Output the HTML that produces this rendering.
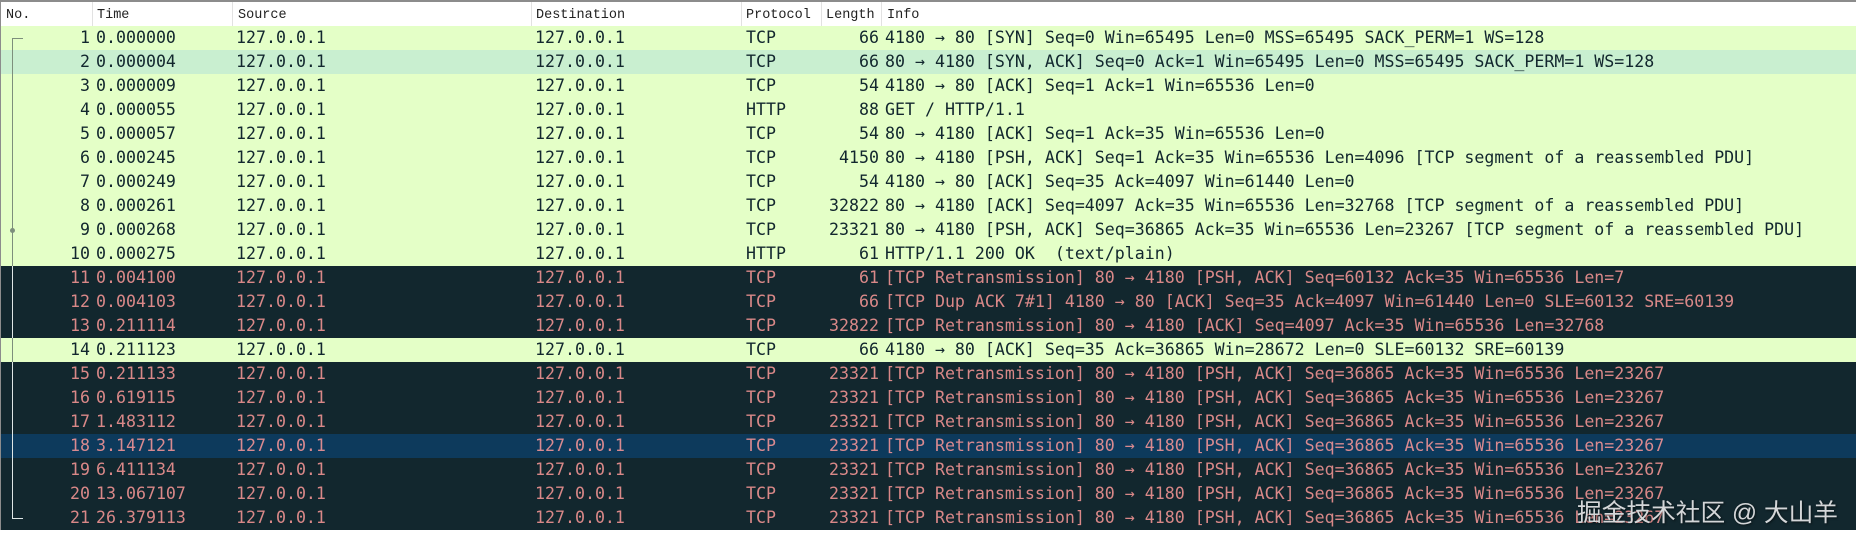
<!DOCTYPE html>
<html><head><meta charset="utf-8">
<style>
html,body{margin:0;padding:0;background:#fff;width:1856px;height:545px;overflow:hidden}
#w{position:relative;width:1856px;height:545px;overflow:hidden;font-family:"DejaVu Sans Mono","Liberation Mono",monospace;font-size:16.6px}
.top{position:absolute;left:0;top:0;width:1856px;height:2px;background:#8c8c8c}
.left{position:absolute;left:0;top:0;width:1px;height:530px;background:#8c8c8c}
.h{position:absolute;top:6px;font:13.5px/20px "Liberation Mono",monospace;color:#222;white-space:pre}
.s{position:absolute;top:2px;width:1px;height:24px;background:#e2e2e2}
.r{position:absolute;left:1px;width:1855px;height:24px;background:#e4ffc7;color:#12272e;line-height:24px;white-space:pre}
.r.d{background:#12272e;color:#d98888}
.r.a{background:#c9efd0}
.r.b{background:#0d3a5c;color:#d98a90}
.r span{position:absolute;top:0}
.n{left:0;width:89px;text-align:right}
.t{left:95px}.o{left:235px}.e{left:534px}.p{left:745px}
.l{left:780px;width:98px;text-align:right}
.i{left:884px}
.v{position:absolute;left:12px;width:1px;background:#7d8f7c}
.v.w{background:#dfe6e6}
.hl{position:absolute;left:12px;width:11px;height:1px}
.wm{position:absolute;left:1577px;top:499px;font:24.7px/30px "Liberation Sans","Noto Sans CJK SC",sans-serif;color:#d4d6d8;text-shadow:1px 1px 2px rgba(0,0,0,.55);white-space:pre}
</style></head><body><div id="w">
<div class="top"></div>
<span class="h" style="left:6px">No.</span>
<span class="h" style="left:97px">Time</span>
<span class="h" style="left:238px">Source</span>
<span class="h" style="left:536px">Destination</span>
<span class="h" style="left:746px">Protocol</span>
<span class="h" style="left:826px">Length</span>
<span class="h" style="left:887px">Info</span>
<div class="s" style="left:92px"></div><div class="s" style="left:232px"></div><div class="s" style="left:531px"></div><div class="s" style="left:741px"></div><div class="s" style="left:821px"></div><div class="s" style="left:881px"></div>

<div class="r" style="top:26px"><span class="n">1</span><span class="t">0.000000</span><span class="o">127.0.0.1</span><span class="e">127.0.0.1</span><span class="p">TCP</span><span class="l">66</span><span class="i">4180 → 80 [SYN] Seq=0 Win=65495 Len=0 MSS=65495 SACK_PERM=1 WS=128</span></div>
<div class="r a" style="top:50px"><span class="n">2</span><span class="t">0.000004</span><span class="o">127.0.0.1</span><span class="e">127.0.0.1</span><span class="p">TCP</span><span class="l">66</span><span class="i">80 → 4180 [SYN, ACK] Seq=0 Ack=1 Win=65495 Len=0 MSS=65495 SACK_PERM=1 WS=128</span></div>
<div class="r" style="top:74px"><span class="n">3</span><span class="t">0.000009</span><span class="o">127.0.0.1</span><span class="e">127.0.0.1</span><span class="p">TCP</span><span class="l">54</span><span class="i">4180 → 80 [ACK] Seq=1 Ack=1 Win=65536 Len=0</span></div>
<div class="r" style="top:98px"><span class="n">4</span><span class="t">0.000055</span><span class="o">127.0.0.1</span><span class="e">127.0.0.1</span><span class="p">HTTP</span><span class="l">88</span><span class="i">GET / HTTP/1.1</span></div>
<div class="r" style="top:122px"><span class="n">5</span><span class="t">0.000057</span><span class="o">127.0.0.1</span><span class="e">127.0.0.1</span><span class="p">TCP</span><span class="l">54</span><span class="i">80 → 4180 [ACK] Seq=1 Ack=35 Win=65536 Len=0</span></div>
<div class="r" style="top:146px"><span class="n">6</span><span class="t">0.000245</span><span class="o">127.0.0.1</span><span class="e">127.0.0.1</span><span class="p">TCP</span><span class="l">4150</span><span class="i">80 → 4180 [PSH, ACK] Seq=1 Ack=35 Win=65536 Len=4096 [TCP segment of a reassembled PDU]</span></div>
<div class="r" style="top:170px"><span class="n">7</span><span class="t">0.000249</span><span class="o">127.0.0.1</span><span class="e">127.0.0.1</span><span class="p">TCP</span><span class="l">54</span><span class="i">4180 → 80 [ACK] Seq=35 Ack=4097 Win=61440 Len=0</span></div>
<div class="r" style="top:194px"><span class="n">8</span><span class="t">0.000261</span><span class="o">127.0.0.1</span><span class="e">127.0.0.1</span><span class="p">TCP</span><span class="l">32822</span><span class="i">80 → 4180 [ACK] Seq=4097 Ack=35 Win=65536 Len=32768 [TCP segment of a reassembled PDU]</span></div>
<div class="r" style="top:218px"><span class="n">9</span><span class="t">0.000268</span><span class="o">127.0.0.1</span><span class="e">127.0.0.1</span><span class="p">TCP</span><span class="l">23321</span><span class="i">80 → 4180 [PSH, ACK] Seq=36865 Ack=35 Win=65536 Len=23267 [TCP segment of a reassembled PDU]</span></div>
<div class="r" style="top:242px"><span class="n">10</span><span class="t">0.000275</span><span class="o">127.0.0.1</span><span class="e">127.0.0.1</span><span class="p">HTTP</span><span class="l">61</span><span class="i">HTTP/1.1 200 OK  (text/plain)</span></div>
<div class="r d" style="top:266px"><span class="n">11</span><span class="t">0.004100</span><span class="o">127.0.0.1</span><span class="e">127.0.0.1</span><span class="p">TCP</span><span class="l">61</span><span class="i">[TCP Retransmission] 80 → 4180 [PSH, ACK] Seq=60132 Ack=35 Win=65536 Len=7</span></div>
<div class="r d" style="top:290px"><span class="n">12</span><span class="t">0.004103</span><span class="o">127.0.0.1</span><span class="e">127.0.0.1</span><span class="p">TCP</span><span class="l">66</span><span class="i">[TCP Dup ACK 7#1] 4180 → 80 [ACK] Seq=35 Ack=4097 Win=61440 Len=0 SLE=60132 SRE=60139</span></div>
<div class="r d" style="top:314px"><span class="n">13</span><span class="t">0.211114</span><span class="o">127.0.0.1</span><span class="e">127.0.0.1</span><span class="p">TCP</span><span class="l">32822</span><span class="i">[TCP Retransmission] 80 → 4180 [ACK] Seq=4097 Ack=35 Win=65536 Len=32768</span></div>
<div class="r" style="top:338px"><span class="n">14</span><span class="t">0.211123</span><span class="o">127.0.0.1</span><span class="e">127.0.0.1</span><span class="p">TCP</span><span class="l">66</span><span class="i">4180 → 80 [ACK] Seq=35 Ack=36865 Win=28672 Len=0 SLE=60132 SRE=60139</span></div>
<div class="r d" style="top:362px"><span class="n">15</span><span class="t">0.211133</span><span class="o">127.0.0.1</span><span class="e">127.0.0.1</span><span class="p">TCP</span><span class="l">23321</span><span class="i">[TCP Retransmission] 80 → 4180 [PSH, ACK] Seq=36865 Ack=35 Win=65536 Len=23267</span></div>
<div class="r d" style="top:386px"><span class="n">16</span><span class="t">0.619115</span><span class="o">127.0.0.1</span><span class="e">127.0.0.1</span><span class="p">TCP</span><span class="l">23321</span><span class="i">[TCP Retransmission] 80 → 4180 [PSH, ACK] Seq=36865 Ack=35 Win=65536 Len=23267</span></div>
<div class="r d" style="top:410px"><span class="n">17</span><span class="t">1.483112</span><span class="o">127.0.0.1</span><span class="e">127.0.0.1</span><span class="p">TCP</span><span class="l">23321</span><span class="i">[TCP Retransmission] 80 → 4180 [PSH, ACK] Seq=36865 Ack=35 Win=65536 Len=23267</span></div>
<div class="r b" style="top:434px"><span class="n">18</span><span class="t">3.147121</span><span class="o">127.0.0.1</span><span class="e">127.0.0.1</span><span class="p">TCP</span><span class="l">23321</span><span class="i">[TCP Retransmission] 80 → 4180 [PSH, ACK] Seq=36865 Ack=35 Win=65536 Len=23267</span></div>
<div class="r d" style="top:458px"><span class="n">19</span><span class="t">6.411134</span><span class="o">127.0.0.1</span><span class="e">127.0.0.1</span><span class="p">TCP</span><span class="l">23321</span><span class="i">[TCP Retransmission] 80 → 4180 [PSH, ACK] Seq=36865 Ack=35 Win=65536 Len=23267</span></div>
<div class="r d" style="top:482px"><span class="n">20</span><span class="t">13.067107</span><span class="o">127.0.0.1</span><span class="e">127.0.0.1</span><span class="p">TCP</span><span class="l">23321</span><span class="i">[TCP Retransmission] 80 → 4180 [PSH, ACK] Seq=36865 Ack=35 Win=65536 Len=23267</span></div>
<div class="r d" style="top:506px"><span class="n">21</span><span class="t">26.379113</span><span class="o">127.0.0.1</span><span class="e">127.0.0.1</span><span class="p">TCP</span><span class="l">23321</span><span class="i">[TCP Retransmission] 80 → 4180 [PSH, ACK] Seq=36865 Ack=35 Win=65536 Len=23267</span></div>

<div class="left"></div>
<div class="hl" style="top:38px;background:#7d8f7c"></div>
<div class="v" style="top:38px;height:228px"></div>
<div class="v w" style="top:266px;height:72px"></div>
<div class="v" style="top:338px;height:24px"></div>
<div class="v w" style="top:362px;height:156px"></div>
<div class="hl" style="top:518px;background:#dfe6e6"></div>
<div style="position:absolute;left:10px;top:228px;width:5px;height:5px;border-radius:50%;background:#7d8f7c"></div>
<div class="wm">掘金技术社区 @ 大山羊</div>
</div></body></html>
